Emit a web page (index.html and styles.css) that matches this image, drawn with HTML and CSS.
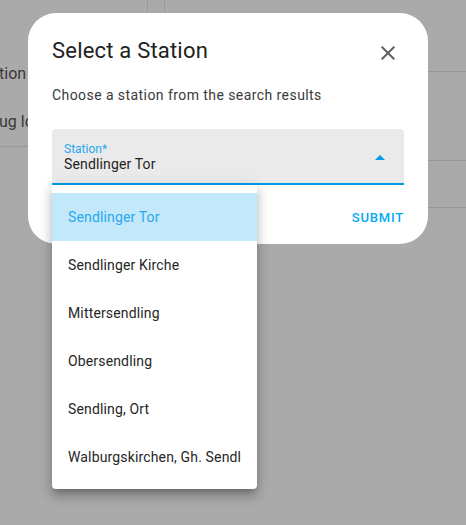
FILE: index.html
```html
<!DOCTYPE html>
<html>
<head>
<meta charset="utf-8">
<link rel="stylesheet" href="styles.css">
</head>
<body>
<div class="page">
  <div class="col-left">
    <div class="left-item">tion</div>
    <div class="left-item">ug lo</div>
  </div>
  <div class="col-mid"></div>
  <div class="col-right">
    <div class="right-row r1"></div>
    <div class="right-row r2"></div>
    <div class="right-row r3"></div>
  </div>
</div>

<div class="dialog">
  <div class="dialog-header">
    <h2 class="dialog-title">Select a Station</h2>
    <svg class="close-icon" viewBox="0 0 24 24" width="24" height="24"><path d="M19 6.41L17.59 5 12 10.59 6.41 5 5 6.41 10.59 12 5 17.59 6.41 19 12 13.41 17.59 19 19 17.59 13.41 12z"/></svg>
  </div>
  <p class="dialog-text">Choose a station from the search results</p>
  <div class="field">
    <div class="field-inner">
      <span class="field-label">Station*</span>
      <span class="field-value">Sendlinger Tor</span>
    </div>
    <span class="field-arrow"></span>
  </div>
  <div class="dialog-actions">
    <span class="btn">SUBMIT</span>
  </div>
</div>

<div class="menu">
  <div class="menu-item selected"><span class="item-text">Sendlinger Tor</span></div>
  <div class="menu-item"><span class="item-text">Sendlinger Kirche</span></div>
  <div class="menu-item"><span class="item-text">Mittersendling</span></div>
  <div class="menu-item"><span class="item-text">Obersendling</span></div>
  <div class="menu-item"><span class="item-text">Sendling, Ort</span></div>
  <div class="menu-item"><span class="item-text">Walburgskirchen, Gh. Sendling</span></div>
</div>
</body>
</html>
```
FILE: styles.css
```css
html, body {
  margin: 0;
  padding: 0;
}
body {
  width: 466px;
  height: 525px;
  overflow: hidden;
  position: relative;
  background: #aaaaaa;
  font-family: Roboto, "Noto Sans", sans-serif;
}
.page {
  display: grid;
  grid-template-columns: 147px 18px 1fr;
  align-items: start;
  height: 525px;
}
.col-left {
  padding-top: 62px;
  padding-bottom: 12px;
  border-bottom: 1px solid #999999;
  color: #393939;
  font-size: 16px;
}
.left-item {
  line-height: 24px;
  margin-left: -1px;
}
.left-item + .left-item {
  margin-top: 24px;
}
.col-mid {
  height: 120px;
  border-left: 1px solid #9a9a9a;
  border-right: 1px solid #9a9a9a;
}
.right-row {
  border-bottom: 1px solid #999999;
}
.r1 { height: 71px; }
.r2 { height: 88px; }
.r3 { height: 46px; }

.dialog {
  position: absolute;
  left: 28px;
  top: 13px;
  width: 400px;
  height: 231px;
  box-sizing: border-box;
  padding: 24px 24px 8px;
  background: #ffffff;
  border-radius: 28px;
}
.dialog-header {
  display: flex;
  justify-content: space-between;
  align-items: flex-start;
}
.dialog-title {
  margin: 0;
  font-size: 22px;
  line-height: 28px;
  font-weight: 400;
  letter-spacing: 0.2px;
  color: #212121;
}
.close-icon {
  fill: #616161;
  margin-top: 4px;
  margin-right: 4px;
}
.dialog-text {
  margin: 20px 0 0;
  font-size: 14px;
  line-height: 20px;
  letter-spacing: 0.43px;
  color: #3a3a3a;
}
.field {
  margin-top: 24px;
  height: 56px;
  box-sizing: border-box;
  background: #eaeaea;
  border-radius: 4px 4px 0 0;
  border-bottom: 2px solid #039be5;
  display: flex;
  align-items: flex-start;
  justify-content: space-between;
  padding-left: 12px;
}
.field-inner {
  display: flex;
  flex-direction: column;
  padding-top: 13px;
}
.field-label {
  font-size: 12px;
  line-height: 14px;
  color: #29a9f0;
}
.field-value {
  font-size: 14px;
  line-height: 16px;
  letter-spacing: 0.15px;
  color: #1f1f1f;
}
.field-arrow {
  width: 0;
  height: 0;
  border-left: 5px solid transparent;
  border-right: 5px solid transparent;
  border-bottom: 5px solid #039be5;
  margin-top: 26px;
  margin-right: 19px;
}
.dialog-actions {
  display: flex;
  justify-content: flex-end;
  margin-top: 15px;
}
.btn {
  height: 36px;
  line-height: 36px;
  font-size: 13px;
  font-weight: 500;
  letter-spacing: 0.8px;
  color: #03a9f4;
}

.menu {
  position: absolute;
  left: 52px;
  top: 185px;
  width: 205px;
  padding: 8px 0;
  background: #ffffff;
  border-radius: 0 0 4px 4px;
  box-shadow: 0 5px 5px -3px rgba(0,0,0,0.2), 0 8px 10px 1px rgba(0,0,0,0.14), 0 3px 14px 2px rgba(0,0,0,0.12);
}
.menu-item {
  height: 48px;
  padding: 0 16px;
  display: flex;
  align-items: center;
  font-size: 14px;
  letter-spacing: 0.15px;
  color: #262626;
}
.item-text {
  min-width: 0;
  white-space: nowrap;
  overflow: hidden;
}
.menu-item.selected {
  background: #c3e8fa;
  color: #29a9f0;
}
```
